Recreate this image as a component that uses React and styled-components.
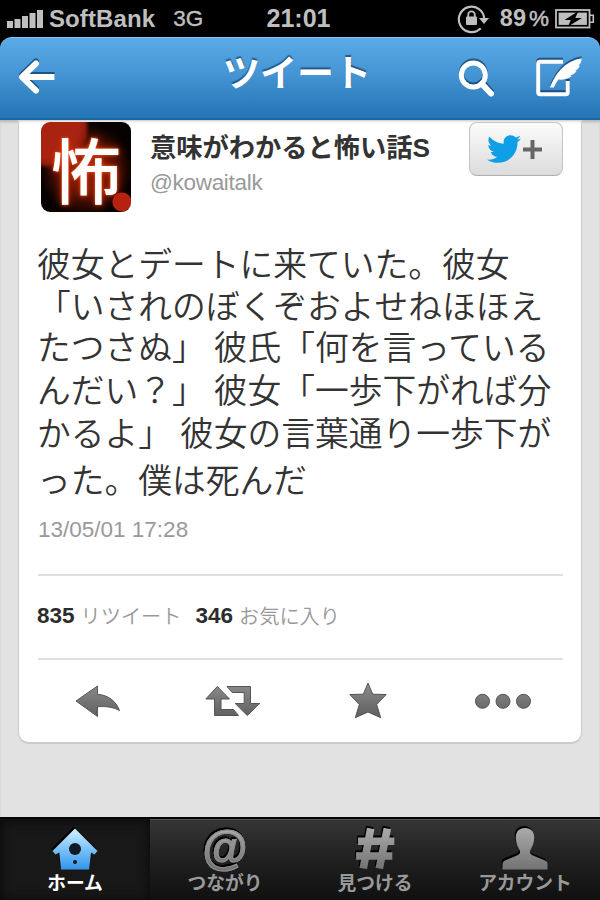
import React from 'react';
import styled, { createGlobalStyle } from 'styled-components';
import { FaTwitter } from 'react-icons/fa';

const GlobalStyle = createGlobalStyle`
  * {
    box-sizing: border-box;
  }

  body {
    margin: 0;
    background: #000;
    font-family: "Liberation Sans", "Noto Sans CJK JP", sans-serif;
  }

  svg {
    display: block;
    flex-shrink: 0;
  }
`;

const Phone = styled.div`
  display: flex;
  flex-direction: column;
  width: 600px;
  height: 900px;
  overflow: hidden;
  background: #000;
`;

const StatusBar = styled.header`
  display: grid;
  grid-template-columns: 1fr auto 1fr;
  align-items: center;
  height: 37px;
  padding: 0 5px 0 7px;
  color: #bfbfbf;
  font-size: 24px;
  font-weight: 700;
  line-height: 37px;
`;

const StatusGroup = styled.div`
  display: flex;
  align-items: center;
  justify-content: ${props => props.$end ? 'flex-end' : 'flex-start'};
`;

const Carrier = styled.span`
  margin-left: 5px;
  letter-spacing: 0.1px;
`;

const Network = styled.span`
  margin-left: 18px;
  font-size: 22.5px;
  font-weight: 400;
  -webkit-text-stroke: 0.4px #bfbfbf;
`;

const Clock = styled.span`
  margin-right: 5px;
  font-size: 25px;
`;

const Battery = styled.span`
  display: flex;
  gap: 3px;
  margin: 0 6px 0 11px;
  font-size: 23.5px;
`;

const Percent = styled.span`
  font-size: 22.5px;
  font-weight: 400;
  -webkit-text-stroke: 0.5px #bfbfbf;
`;

const NavBar = styled.nav`
  display: grid;
  grid-template-columns: 1fr auto 1fr;
  align-items: center;
  flex-shrink: 0;
  height: 83px;
  padding: 0 18px 0 16px;
  border-top: 1px solid #8cc4ee;
  border-bottom: 2px solid #1d689f;
  border-radius: 12px 12px 0 0;
  background: linear-gradient(#5aabe7, #4594d3 45%, #2475b6);
`;

const NavTitle = styled.h1`
  margin: 0 4px 7px 0;
  color: #fff;
  font-size: 37px;
  font-weight: 700;
  line-height: 50px;
  text-shadow: 0 -2px 1px rgba(15, 60, 105, 0.7);
`;

const NavActions = styled.div`
  display: flex;
  justify-content: flex-end;
  gap: 38px;
`;

const NavIcon = styled.svg`
  filter: drop-shadow(0 -1.5px 0.5px rgba(15, 60, 105, 0.75));
`;

const Content = styled.main`
  display: flex;
  flex-direction: column;
  flex: 1;
  padding: 0 18px;
  background: #e2e2e2;
  box-shadow: inset 0 3px 3px -1px rgba(0, 0, 0, 0.2);
`;

const Card = styled.article`
  height: 624px;
  padding: 2px 18px 0 19px;
  border: 1px solid #cdcdcd;
  border-top: 0;
  border-bottom: 2px solid #cacaca;
  border-radius: 0 0 11px 11px;
  background: #fff;
  box-shadow: inset 0 3px 3px -2px rgba(0, 0, 0, 0.25);
`;

const Author = styled.div`
  display: flex;
  align-items: flex-start;
  height: 122px;
  padding-left: 3px;
`;

const Avatar = styled.div`
  display: flex;
  align-items: center;
  justify-content: center;
  width: 90px;
  height: 90px;
  border-radius: 9px;
  background:
    radial-gradient(circle at 81px 80px, #b52310 9px, transparent 10px),
    radial-gradient(ellipse at 8px 4px, #a82411 30px, #8f1c0d 36px, transparent 41px),
    radial-gradient(circle at 36px 12px, #8a1c0e 7px, transparent 10px),
    radial-gradient(circle at 45px 48px, #6b1404 20px, transparent 46px),
    #070201;
  color: #fff;
  font-family: "Noto Sans CJK JP", sans-serif;
  font-size: 71px;
  font-weight: 500;
  line-height: 90px;
  text-shadow: 0 0 3px #ff5a22, 0 0 9px #c62d07;
`;

const Names = styled.div`
  flex: 1;
  margin-left: 19px;
`;

const DisplayName = styled.h2`
  margin: 6px 0 0;
  color: #333;
  font-size: 26.25px;
  font-weight: 700;
  line-height: 40px;
  white-space: nowrap;
`;

const Handle = styled.p`
  margin: 2px 0 0;
  color: #999;
  font-size: 22.5px;
  letter-spacing: -0.3px;
  line-height: 26px;
`;

const FollowButton = styled.button`
  display: flex;
  align-items: center;
  justify-content: center;
  gap: 2px;
  width: 94px;
  height: 54px;
  padding: 0 4px 0 0;
  border: 1px solid #c4c4c4;
  border-bottom-color: #b0b0b0;
  border-radius: 8px;
  background: linear-gradient(#fbfbfb, #dcdcdc);
`;

const Tweet = styled.div`
  margin-left: -1px;
  color: #333;
  font-size: 33.75px;
  font-weight: 350;
  word-spacing: -1.5px;
`;

const TweetLine = styled.p`
  height: ${props => props.$height}px;
  margin: 0;
  line-height: 42px;
  white-space: pre;
`;

const Timestamp = styled.time`
  display: block;
  height: 57px;
  color: #999;
  font-size: 22.5px;
  line-height: 26px;
`;

const Stats = styled.div`
  display: flex;
  align-items: center;
  height: 86px;
  padding-bottom: 2px;
  border: solid #e0e0e0;
  border-width: 2px 0;
`;

const StatCount = styled.strong`
  margin-left: -1px;
  color: #2c2c2c;
  font-size: 22.5px;
`;

const StatLabel = styled.span`
  margin: 0 15px 2px 6px;
  color: #999;
  font-size: 20.2px;
  font-weight: 350;
`;

const Actions = styled.div`
  display: grid;
  grid-template-columns: repeat(4, 135px);
  justify-content: center;
  justify-items: center;
  align-items: center;
  height: 82px;
`;

const TabBar = styled.footer`
  display: grid;
  grid-template-columns: repeat(4, 150px);
  height: 83px;
  border-top: 2px solid #050505;
  background: linear-gradient(#363636, #222 45%, #101010);
`;

const Tab = styled.div`
  display: flex;
  flex-direction: column;
  align-items: center;
  padding-top: 7px;
  border-top: 1px solid ${props => props.$active ? '#111' : '#555'};
  background: ${props => props.$active ? '#181818' : 'none'};
  box-shadow: ${props => props.$active ? 'inset 0 0 12px #080808' : 'none'};
  color: ${props => props.$active ? '#fff' : '#999'};
`;

const TabIcon = styled.div`
  display: flex;
  align-items: center;
  justify-content: center;
  height: 44px;
  filter: drop-shadow(-1px -1.5px 0 #000);
`;

const AtSign = styled.span`
  margin-top: -3px;
  background: linear-gradient(#aaa 15%, #737373 85%);
  background-clip: text;
  color: transparent;
  font-size: 46px;
  font-weight: 700;
  line-height: 50px;
  -webkit-text-stroke: 1.2px #8c8c8c;
`;

const TabLabel = styled.span`
  font-size: 18.75px;
  font-weight: 700;
  line-height: 26px;
`;

const tweetLines = [
  { text: '彼女とデートに来ていた。彼女', height: 42 },
  { text: '「いされのぼくぞおよせねほほえ', height: 41 },
  { text: 'たつさぬ」 彼氏「何を言っている', height: 43 },
  { text: 'んだい？」 彼女「一歩下がれば分', height: 43 },
  { text: 'かるよ」 彼女の言葉通り一歩下が', height: 47 },
  { text: 'った。僕は死んだ', height: 57 },
];

const SignalIcon = () => (
  <svg width="37" height="19" viewBox="0 0 37 19" fill="#bfbfbf">
    <rect x="0" y="12" width="6" height="7" />
    <rect x="7.5" y="10" width="6" height="9" />
    <rect x="15" y="7" width="6" height="12" />
    <rect x="22.5" y="4" width="6" height="15" />
    <rect x="30" y="1" width="6" height="18" />
  </svg>
);

const RotationLockIcon = () => (
  <svg width="32" height="30" viewBox="0 0 32 30">
    <path d="M23.7 24.2A12.7 12.7 0 1 1 27.2 14.5" fill="none" stroke="#bfbfbf" strokeWidth="2.2" />
    <path d="M22 14h10l-5 6z" fill="#bfbfbf" />
    <rect x="9" y="12.5" width="11" height="8.5" rx="1" fill="#bfbfbf" />
    <path d="M11.2 13v-2.3a3.3 3.3 0 0 1 6.6 0V13" fill="none" stroke="#bfbfbf" strokeWidth="1.8" />
  </svg>
);

const BatteryIcon = () => (
  <svg width="40" height="20" viewBox="0 0 40 20">
    <rect x="1" y="1" width="33.5" height="17.5" fill="none" stroke="#bfbfbf" strokeWidth="1.8" />
    <rect x="3.6" y="3.6" width="28.3" height="12.3" fill="#bfbfbf" />
    <path d="M35 6.3h3.3v7H35" fill="none" stroke="#bfbfbf" strokeWidth="1.6" />
    <path d="M22 3 9.5 11h6.3L13 17.5 27 9h-6.8L23 3z" fill="#000" />
  </svg>
);

const BackIcon = () => (
  <NavIcon width="44" height="44" viewBox="0 0 44 44" fill="none" stroke="#fff" strokeWidth="6" strokeLinejoin="round">
    <path d="M20 7.5 6 21l14 13.5" strokeLinecap="round" />
    <path d="M7 21h31.5" />
  </NavIcon>
);

const SearchIcon = () => (
  <NavIcon width="44" height="44" viewBox="0 0 44 44" fill="none" stroke="#fff">
    <circle cx="21.3" cy="19" r="12" strokeWidth="5" />
    <path d="m30 28 9 9.5" strokeWidth="6" strokeLinecap="round" />
  </NavIcon>
);

const ComposeIcon = () => (
  <NavIcon width="48" height="44" viewBox="0 0 48 44">
    <path d="M29 5.8H6.200a2 2 0 0 0-2 2v28.400a2 2 0 0 0 2 2h25.500a2 2 0 0 0 2-2V25" fill="none" stroke="#fff" strokeWidth="4" />
    <path
      d="M16 31.500C21 18.500 30 5 47.600 2.200c.2 3-1 5.300-3 7.300h1.200c-.8 2.500-2.500 4.200-4.800 5.600h1.600c-1.500 2.300-3.500 3.600-6.200 4.400l1.200.5c-3.500 3-8.300 4-13 3.600-2 2.300-3.200 4.700-4.800 7.900z"
      fill="#fff"
    />
  </NavIcon>
);

const ActionIcon = ({ id, children }) => (
  <svg width="56" height="40" viewBox="0 0 56 40" fill={`url(#${id})`} stroke="#555" strokeWidth="1">
    <defs>
      <linearGradient id={id} gradientUnits="userSpaceOnUse" x1="0" y1="4" x2="0" y2="37">
        <stop offset="0" stopColor="#8a8a8a" />
        <stop offset="1" stopColor="#5e5e5e" />
      </linearGradient>
    </defs>
    {children}
  </svg>
);

const HomeIcon = () => (
  <svg width="46" height="44" viewBox="0 0 46 44">
    <defs>
      <linearGradient id="home" x1="0" y1="0" x2="0" y2="1">
        <stop offset="0" stopColor="#d5efff" />
        <stop offset="0.5" stopColor="#7cc3f8" />
        <stop offset="1" stopColor="#3494ea" />
      </linearGradient>
    </defs>
    <path
      d="M23 1.500 45.500 24l-3 3.500-3.500-2L37 42.500H9L7.300 25.500l-3.800 2L.5 24z"
      fill="url(#home)"
    />
    <circle cx="23" cy="22" r="6" fill="#111a22" />
    <circle cx="23" cy="35" r="2" fill="#111a22" />
  </svg>
);

const HashIcon = () => (
  <svg width="46" height="44" viewBox="0 0 46 44" fill="none" stroke="url(#hash)" strokeWidth="7.600">
    <defs>
      <linearGradient id="hash" gradientUnits="userSpaceOnUse" x1="0" y1="1" x2="0" y2="42">
        <stop offset="0" stopColor="#aaa" />
        <stop offset="1" stopColor="#737373" />
      </linearGradient>
    </defs>
    <path d="M6 14.300h36.300M4 29h36.300" />
    <path d="M18.700 1.500 11.300 41.500M35.300 1.500 27.300 41.500" />
  </svg>
);

const PersonIcon = () => (
  <svg width="46" height="44" viewBox="0 0 46 44">
    <defs>
      <linearGradient id="person" x1="0" y1="0" x2="0" y2="1">
        <stop offset="0" stopColor="#aaa" />
        <stop offset="1" stopColor="#737373" />
      </linearGradient>
    </defs>
    <path
      d="M23 1c6 0 9.500 3.800 9.200 10-.2 5.500-2 9-4 12.500-.8 2.500.2 3.800 2.800 5l11.500 4.800c2 .9 3 2 3 4v5.200H.5v-5.200c0-2 1-3.100 3-4L15 28.500c2.600-1.200 3.600-2.500 2.800-5-2-3.500-3.800-7-4-12.500C13.500 4.800 17 1 23 1z"
      fill="url(#person)"
    />
  </svg>
);

const App = () => (
  <>
    <GlobalStyle />
    <Phone>
      <StatusBar>
        <StatusGroup>
          <SignalIcon />
          <Carrier>SoftBank</Carrier>
          <Network>3G</Network>
        </StatusGroup>
        <Clock>21:01</Clock>
        <StatusGroup $end>
          <RotationLockIcon />
          <Battery>
            89<Percent>%</Percent>
          </Battery>
          <BatteryIcon />
        </StatusGroup>
      </StatusBar>

      <NavBar>
        <BackIcon />
        <NavTitle>ツイート</NavTitle>
        <NavActions>
          <SearchIcon />
          <ComposeIcon />
        </NavActions>
      </NavBar>

      <Content>
        <Card>
          <Author>
            <Avatar>怖</Avatar>
            <Names>
              <DisplayName>意味がわかると怖い話S</DisplayName>
              <Handle>@kowaitalk</Handle>
            </Names>
            <FollowButton>
              <FaTwitter size={34} color="#0f9fe6" />
              <svg width="19" height="19" viewBox="0 0 19 19" stroke="#666" strokeWidth="4">
                <path d="M9.500 0v19M0 9.500h19" />
              </svg>
            </FollowButton>
          </Author>

          <Tweet>
            {tweetLines.map(line => (
              <TweetLine key={line.text} $height={line.height}>{line.text}</TweetLine>
            ))}
          </Tweet>
          <Timestamp>13/05/01 17:28</Timestamp>

          <Stats>
            <StatCount>835</StatCount>
            <StatLabel>リツイート</StatLabel>
            <StatCount>346</StatCount>
            <StatLabel>お気に入り</StatLabel>
          </Stats>

          <Actions>
            <ActionIcon id="reply">
              <path d="M6 20 27.500 5v8.300C38 14 46 20 49.500 29.500 43 26 36 25.200 27.500 25.700v9.800z" />
            </ActionIcon>
            <ActionIcon id="retweet">
              <path d="M12.300 5.500 24.500 18H16v10.500h12.500l5 6H9.500V18H.8z" />
              <path d="M22 5.500h23.500v17h9.200L42.300 34.500 30.200 22.500h9V11.500h-12z" />
            </ActionIcon>
            <ActionIcon id="favorite">
              <path d="m28 2 4.700 11.200 13.500.3-9.500 10 4 13.200L28 31l-12.700 5.700 4-13.200-9.500-10 13.500-.3z" />
            </ActionIcon>
            <ActionIcon id="more">
              <circle cx="7.500" cy="20.300" r="7" />
              <circle cx="28" cy="20.300" r="7" />
              <circle cx="48.500" cy="20.300" r="7" />
            </ActionIcon>
          </Actions>
        </Card>
      </Content>

      <TabBar>
        <Tab $active>
          <TabIcon><HomeIcon /></TabIcon>
          <TabLabel>ホーム</TabLabel>
        </Tab>
        <Tab>
          <TabIcon><AtSign>@</AtSign></TabIcon>
          <TabLabel>つながり</TabLabel>
        </Tab>
        <Tab>
          <TabIcon><HashIcon /></TabIcon>
          <TabLabel>見つける</TabLabel>
        </Tab>
        <Tab>
          <TabIcon><PersonIcon /></TabIcon>
          <TabLabel>アカウント</TabLabel>
        </Tab>
      </TabBar>
    </Phone>
  </>
);

export default App;
